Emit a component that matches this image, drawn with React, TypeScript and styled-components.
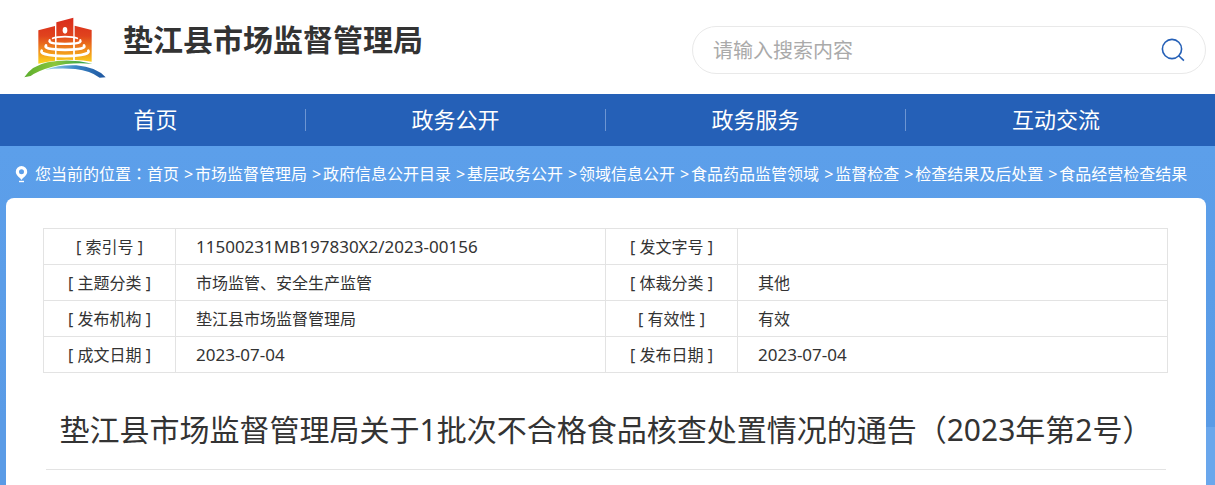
import React from 'react';
import styled, { createGlobalStyle } from 'styled-components';

const GlobalStyle = createGlobalStyle`
  *, *::before, *::after { box-sizing: border-box; }
  html { min-height: 100%; background: #fff; }
  body {
    margin: 0;
    color: #333;
    font: 16px/24px "Noto Sans", "Noto Sans CJK SC", sans-serif;
    overflow-x: hidden;
  }
`;

const Wrap = styled.div`
  max-width: 1215px;
  margin: 0 auto;
  padding: 0 9px 0 6px;
`;

const HeaderInner = styled(Wrap)`
  display: flex;
  align-items: flex-start;
  justify-content: space-between;
  gap: 24px;
  height: 94px;
`;

const Brand = styled.a`
  display: flex;
  gap: 17px;
  padding: 17px 0 0 18px;
  color: #333;
  text-decoration: none;
`;

const SiteName = styled.h1`
  margin: 0;
  font-size: 30px;
  line-height: 46px;
  font-weight: 700;
  white-space: nowrap;
`;

const Search = styled.form`
  display: flex;
  align-items: center;
  flex: 0 1 514px;
  height: 48px;
  margin-top: 26px;
  padding: 0 20px;
  border: 1px solid #e9e9e9;
  border-radius: 24px;
`;

const SearchInput = styled.input`
  flex: 1;
  min-width: 0;
  padding: 0;
  border: 0;
  outline: 0;
  background: none;
  color: #333;
  font: 20px/28px "Noto Sans CJK SC", sans-serif;
  &::placeholder { color: #aaa; opacity: 1; }
`;

const SearchButton = styled.button`
  display: flex;
  padding: 0;
  border: 0;
  background: none;
  color: #2560b7;
  cursor: pointer;
`;

const Nav = styled.nav`
  background: #2560b7;
`;

const NavList = styled.ul`
  display: grid;
  grid-template-columns: repeat(4, 1fr);
  margin: 0;
  padding: 0;
  list-style: none;
`;

const NavItem = styled.li`
  display: flex;
  align-items: center;
  height: 52px;
  &:not(:last-child)::after {
    content: "";
    width: 1px;
    height: 22px;
    background: #6d95d2;
  }
`;

const NavLink = styled.a`
  flex: 1;
  color: #fff;
  font-size: 22px;
  line-height: 50px;
  padding-bottom: 2px;
  text-align: center;
  text-decoration: none;
`;

const Main = styled.main`
  background:
    linear-gradient(#6aa7ec, #6aa7ec) right 281px / 50% 100% no-repeat,
    linear-gradient(#5c9fea, #5a9be6 280px);
`;

const Crumbs = styled.nav`
  display: flex;
  align-items: center;
  height: 52px;
  padding: 4px 0 0 9px;
  color: #fff;
  white-space: nowrap;
`;

const CrumbLabel = styled.span`
  margin-left: 7px;
`;

const Colon = styled.span`
  font-family: "Noto Sans CJK TC", sans-serif;
  line-height: 1;
`;

const CrumbLink = styled.a`
  color: #fff;
  text-decoration: none;
`;

const Separator = styled.span`
  width: 16px;
  padding-left: 5px;
`;

const Card = styled.article`
  padding: 30px 38px 15px 37px;
  border-radius: 8px 8px 0 0;
  background: #fff;
`;

const InfoTable = styled.table`
  width: 100%;
  table-layout: fixed;
  border-collapse: collapse;
`;

const LabelCell = styled.th`
  width: 132px;
  height: 36px;
  padding: 0;
  border: 1px solid #e3e3e3;
  font-weight: 400;
  text-align: center;
`;

const ValueCell = styled.td<{ $numeric: boolean }>`
  height: 36px;
  padding: 0 20px;
  border: 1px solid #e3e3e3;
  font-size: ${({ $numeric }) => ($numeric ? '17px' : '16px')};
`;

const Title = styled.h2`
  margin: 0 2px 0 3px;
  padding: 33px 0 15px;
  border-bottom: 1px solid #e3e3e3;
  font-size: 30px;
  line-height: 48px;
  font-weight: 400;
  text-align: center;
`;

const Logo = () => (
  <svg width="82" height="61" viewBox="27 22 246 183" aria-hidden="true">
    <defs>
      <linearGradient id="tower" gradientUnits="userSpaceOnUse" x1="0" y1="24" x2="0" y2="162">
        <stop offset="0" stopColor="#d92b1c" />
        <stop offset="0.4" stopColor="#e0431d" />
        <stop offset="0.7" stopColor="#f08a1c" />
        <stop offset="1" stopColor="#fbd61c" />
      </linearGradient>
      <linearGradient id="hill" x1="0" y1="0" x2="1" y2="0">
        <stop offset="0" stopColor="#5cae2e" />
        <stop offset="0.45" stopColor="#8cc63c" />
        <stop offset="1" stopColor="#1b9a4a" />
      </linearGradient>
      <linearGradient id="river" x1="0" y1="0" x2="1" y2="0">
        <stop offset="0" stopColor="#a5dcf0" />
        <stop offset="0.5" stopColor="#3b86c6" />
        <stop offset="1" stopColor="#1d559f" />
      </linearGradient>
    </defs>
    <g fill="url(#tower)">
      <path d="M70 62 120 49V153Q94 156 70 162Z" />
      <path d="M124 38 175 24V151Q150 149 124 152Z" />
      <path d="M179 48 230 61V156Q204 151 179 151Z" />
    </g>
    <ellipse cx="150" cy="62" rx="7" ry="10" fill="#fff" />
    <g fill="none" stroke="#fff" strokeLinecap="round">
      <path d="M113 86Q124 81 150 81Q176 81 187 86" strokeWidth="5" />
      <path d="M104 92Q100 99 118 101Q150 104 182 101Q200 99 196 92" strokeWidth="7" />
      <path d="M93 107Q88 115 110 118Q150 123 190 118Q212 115 207 107" strokeWidth="8" />
      <path d="M80 123Q76 132 102 136Q150 143 198 136Q224 132 220 123" strokeWidth="8" />
      <path d="M122 84V153M177 84V153" strokeWidth="4" />
    </g>
    <path d="M28 203Q50 168 98 158Q162 145 232 162Q165 157 112 171Q68 183 47 199Z" fill="url(#hill)" />
    <path d="M91 180Q132 165 184 167Q244 172 272 203L254 204Q226 183 181 178Q133 174 91 180Z" fill="url(#river)" />
  </svg>
);

const SearchIcon = () => (
  <svg width="24" height="24" viewBox="0 0 24 24" fill="none" stroke="currentColor" strokeWidth="1.6" aria-hidden="true">
    <circle cx="11" cy="11" r="9.6" />
    <path d="m17.5 17.5 5.4 5.2" />
  </svg>
);

const PinIcon = () => (
  <svg width="13" height="17" viewBox="0 0 13 17" aria-hidden="true">
    <path
      d="M6.5 0A5.7 5.7 0 0 0 0.8 5.8C0.8 9 4.2 11 6.5 14C8.8 11 12.2 9 12.2 5.8A5.7 5.7 0 0 0 6.5 0ZM6.5 3.3A2.5 2.5 0 1 1 6.5 8.3A2.5 2.5 0 0 1 6.5 3.3Z"
      fill="#fff"
      fillRule="evenodd"
    />
    <path d="M4 15.5h5" stroke="#fff" strokeWidth="1.4" />
  </svg>
);

const navItems = ['首页', '政务公开', '政务服务', '互动交流'];

const crumbs = [
  '首页',
  '市场监督管理局',
  '政府信息公开目录',
  '基层政务公开',
  '领域信息公开',
  '食品药品监管领域',
  '监督检查',
  '检查结果及后处置',
  '食品经营检查结果',
];

const infoRows = [
  [['索引号', '11500231MB197830X2/2023-00156'], ['发文字号', '']],
  [['主题分类', '市场监管、安全生产监管'], ['体裁分类', '其他']],
  [['发布机构', '垫江县市场监督管理局'], ['有效性', '有效']],
  [['成文日期', '2023-07-04'], ['发布日期', '2023-07-04']],
];

export default function App() {
  return (
    <>
      <GlobalStyle />
      <header lang="zh-CN">
        <HeaderInner>
          <Brand href="#">
            <Logo />
            <SiteName>垫江县市场监督管理局</SiteName>
          </Brand>
          <Search role="search" onSubmit={(e) => e.preventDefault()}>
            <SearchInput type="text" aria-label="搜索" placeholder="请输入搜索内容" />
            <SearchButton type="submit" aria-label="搜索">
              <SearchIcon />
            </SearchButton>
          </Search>
        </HeaderInner>
        <Nav>
          <Wrap>
            <NavList>
              {navItems.map((item) => (
                <NavItem key={item}>
                  <NavLink href="#">{item}</NavLink>
                </NavItem>
              ))}
            </NavList>
          </Wrap>
        </Nav>
      </header>
      <Main lang="zh-CN">
        <Wrap>
          <Crumbs>
            <PinIcon />
            <CrumbLabel>
              您当前的位置<Colon lang="zh-TW">：</Colon>
            </CrumbLabel>
            {crumbs.map((crumb, i) => (
              <React.Fragment key={crumb}>
                {i > 0 && <Separator>&gt;</Separator>}
                <CrumbLink href="#">{crumb}</CrumbLink>
              </React.Fragment>
            ))}
          </Crumbs>
          <Card>
            <InfoTable>
              <tbody>
                {infoRows.map((row) => (
                  <tr key={row[0][0]}>
                    {row.map(([label, value]) => (
                      <React.Fragment key={label}>
                        <LabelCell scope="row">[ {label} ]</LabelCell>
                        <ValueCell $numeric={/^\d/.test(value)}>{value}</ValueCell>
                      </React.Fragment>
                    ))}
                  </tr>
                ))}
              </tbody>
            </InfoTable>
            <Title>垫江县市场监督管理局关于1批次不合格食品核查处置情况的通告（2023年第2号）</Title>
          </Card>
        </Wrap>
      </Main>
    </>
  );
}
